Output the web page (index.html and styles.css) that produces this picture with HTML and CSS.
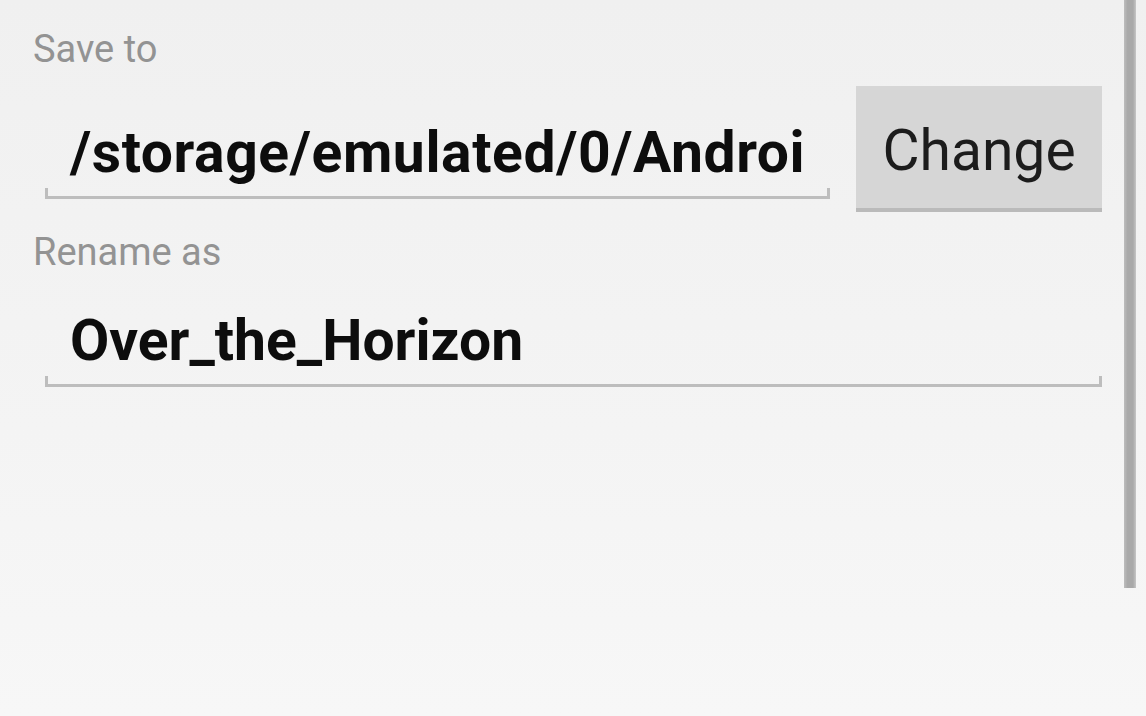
FILE: index.html
```html
<!DOCTYPE html>
<html>
<head>
<meta charset="utf-8">
<link rel="stylesheet" href="styles.css">
</head>
<body>
<div class="dialog">
  <div class="label">Save to</div>
  <div class="row">
    <div class="field field-path"><span class="value">/storage/emulated/0/Androi</span></div>
    <div class="button">Change</div>
  </div>
  <div class="label label-rename">Rename as</div>
  <div class="field field-name"><span class="value">Over_the_Horizon</span></div>
</div>
<div class="scrollbar"></div>
</body>
</html>
```

FILE: styles.css
```css
html, body {
  margin: 0;
  padding: 0;
  height: 100%;
}
body {
  width: 1146px;
  height: 716px;
  overflow: hidden;
  background: linear-gradient(#f0f0f0 0%, #f4f4f4 60%, #f7f7f7 100%);
  font-family: Roboto, "Noto Sans", sans-serif;
  position: relative;
}
.dialog {
  padding: 27px 44px 0 33px;
}
.label {
  font-size: 38px;
  line-height: 44px;
  color: #939393;
  height: 44px;
}
.row {
  display: flex;
  align-items: flex-start;
  margin-top: 15px;
}
.field {
  position: relative;
  margin-left: 12px;
  padding: 34px 0 10px 25px;
  border-bottom: 3px solid #bdbdbd;
  font-size: 57px;
  line-height: 66px;
  height: 66px;
  font-weight: 700;
  color: #0d0d0d;
  white-space: nowrap;
  overflow: visible;
}
.field::before,
.field::after {
  content: "";
  position: absolute;
  bottom: -3px;
  width: 3px;
  height: 11px;
  background: #bdbdbd;
}
.field::before { left: 0; }
.field::after { right: 0; }
.field-path {
  width: 760px;
  letter-spacing: 0.6px;
}
.button {
  margin-left: 26px;
  width: 246px;
  height: 115px;
  padding-top: 7px;
  background: #d6d6d6;
  border-bottom: 4px solid #bababa;
  display: flex;
  align-items: center;
  justify-content: center;
  font-size: 57px;
  line-height: 66px;
  color: #1c1c1c;
}
.label-rename {
  margin-top: 18px;
}
.field-name {
  padding-top: 34px;
}
.scrollbar {
  position: absolute;
  left: 1124px;
  top: 0;
  width: 12px;
  height: 588px;
  background: linear-gradient(90deg, #bdbdbd 0, #a9a9a9 30%, #a9a9a9 75%, #c6c6c6 100%);
}
```
